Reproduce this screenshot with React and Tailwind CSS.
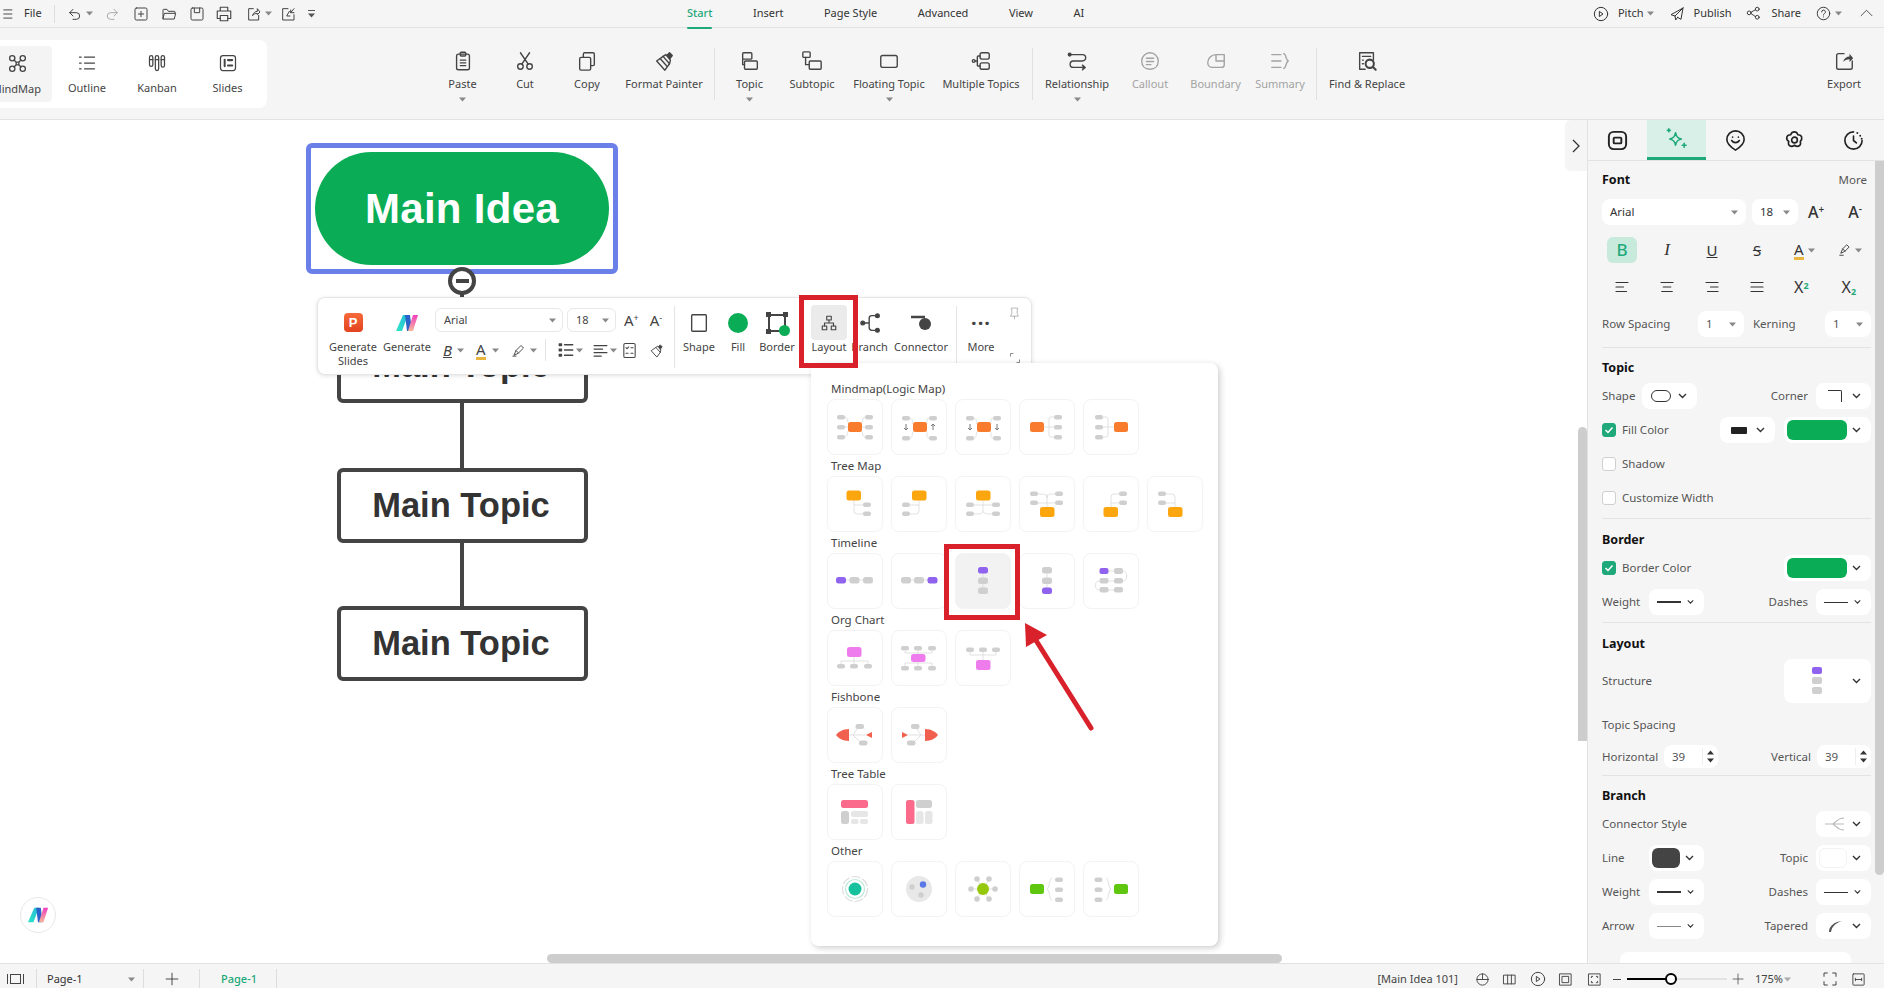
import { Fragment } from "react";

const G = "#cfcfcf";
const OR = "#f97b2d";
const AM = "#fba60f";
const PU = "#8f63ee";
const PK = "#ef7cec";
const GR = "#5fc70f";
const LINE = "#d9d9d9";

function Ico({ size = 20, className = "", sw = 1.5, children }) {
  return (
    <svg
      width={size}
      height={size}
      viewBox="0 0 24 24"
      fill="none"
      stroke="currentColor"
      strokeWidth={sw}
      strokeLinecap="round"
      strokeLinejoin="round"
      className={className}
    >
      {children}
    </svg>
  );
}

function Caret({ className = "text-[#888]" }) {
  return (
    <svg width="7" height="5" viewBox="0 0 7 5" className={className}>
      <path d="M0 0.5h7L3.5 4.5z" fill="currentColor" />
    </svg>
  );
}

function Chevron() {
  return (
    <svg width="9" height="6" viewBox="0 0 9 6" className="text-[#333]">
      <path d="M1 1l3.5 3.5L8 1" fill="none" stroke="currentColor" strokeWidth="1.4" />
    </svg>
  );
}

function Logo({ size = 24 }) {
  return (
    <svg width={size} height={size} viewBox="0 0 24 24">
      <defs>
        <linearGradient id="logoA" x1="0" y1="1" x2="1" y2="0">
          <stop offset="0" stopColor="#2ee6c4" />
          <stop offset="1" stopColor="#25b9dc" />
        </linearGradient>
        <linearGradient id="logoB" x1="0" y1="0" x2="0" y2="1">
          <stop offset="0" stopColor="#f03fc0" />
          <stop offset="1" stopColor="#f7b79a" />
        </linearGradient>
      </defs>
      <path d="M8 4h5L7 20H1z" fill="url(#logoA)" />
      <path d="M10 4h5l2 16h-5z" fill="#2b62c9" />
      <path d="M18 4h5l-5 16h-5z" fill="url(#logoB)" />
    </svg>
  );
}

// ribbon icons
const ribbonIcons = {
  paste: (
    <>
      <rect x="5" y="4.5" width="14" height="17" rx="2" />
      <rect x="9" y="2.5" width="6" height="4" rx="1" />
      <path d="M9 11h6M9 14h6M9 17h6" />
    </>
  ),
  cut: (
    <>
      <circle cx="7" cy="18" r="3" />
      <circle cx="17" cy="18" r="3" />
      <path d="M8.5 15.5L17 3M15.5 15.5L7 3" />
    </>
  ),
  copy: (
    <>
      <rect x="4" y="8" width="12" height="14" rx="1.5" />
      <path d="M8 8V4.5A1.5 1.5 0 0 1 9.5 3h9A1.5 1.5 0 0 1 20 4.5v11a1.5 1.5 0 0 1-1.5 1.5H16" />
    </>
  ),
  painter: (
    <>
      <path d="M4 12l7-5 7 8-5 7z" />
      <path d="M11 7l3-2 5 6-1 4M8 9.5l7 8" />
      <path d="M15 6l3-3 3 3-3 4" fill="currentColor" />
    </>
  ),
  topic: (
    <>
      <rect x="4" y="3" width="10" height="7" rx="1" />
      <rect x="6" y="12" width="14" height="9" rx="1" />
      <path d="M4 10v6h2" />
    </>
  ),
  subtopic: (
    <>
      <rect x="2" y="2" width="8" height="6" rx="1" />
      <rect x="9" y="12" width="13" height="9" rx="1" />
      <path d="M5 8v8h4" />
    </>
  ),
  floating: <rect x="3" y="6" width="18" height="13" rx="2" />,
  multiple: (
    <>
      <rect x="11" y="3" width="10" height="7" rx="2" />
      <rect x="11" y="14" width="10" height="7" rx="2" />
      <circle cx="4" cy="12" r="1.5" />
      <path d="M5.5 12H8M11 6.5H9a1 1 0 0 0-1 1v9a1 1 0 0 0 1 1h2" />
    </>
  ),
  relationship: (
    <>
      <circle cx="4" cy="5" r="1.5" fill="currentColor" />
      <path d="M5 5h13a2 2 0 0 1 0 7H8a3 3 0 0 0 0 7h12" />
      <path d="M18 16.5l3 2.5-3 2.5" fill="currentColor" />
    </>
  ),
  callout: (
    <>
      <path d="M12 3a9 9 0 0 1 9 9c0 5-3 9-9 9-6 0-9-4-9-9a9 9 0 0 1 9-9z" />
      <path d="M8 9h8M8 12.5h8M8 16h5" />
    </>
  ),
  boundary: <path d="M3 14a9 9 0 0 1 9-9h9v11a3 3 0 0 1-3 3H8a5 5 0 0 1-5-5zM12 5v7h9" />,
  summary: <path d="M3 5h10M3 12h10M3 19h10M16 4c3 0 2 7 5 8-3 1-2 8-5 8" />,
  find: (
    <>
      <path d="M10 21H4V3h15v8" />
      <path d="M7 7h9M7 11h1M7 15h1" />
      <circle cx="15" cy="15" r="4.5" strokeWidth="2.2" />
      <path d="M18.5 18.5L21.5 21.5" strokeWidth="2.2" />
    </>
  ),
  export: (
    <>
      <path d="M12 4H6a2 2 0 0 0-2 2v13a2 2 0 0 0 2 2h13a2 2 0 0 0 2-2v-7" />
      <path d="M11 13c1-4 4-6 7-6V4l4 5-4 4v-3c-3 0-5 1-7 3z" fill="currentColor" stroke="none" />
    </>
  ),
};

const ribbonGroups = [
  [
    { key: "paste", label: "Paste", w: "w-[63px]", caret: true },
    { key: "cut", label: "Cut", w: "w-[62px]" },
    { key: "copy", label: "Copy", w: "w-[62px]" },
    { key: "painter", label: "Format Painter", w: "w-[92px]" },
  ],
  [
    { key: "topic", label: "Topic", w: "w-[61px]", caret: true },
    { key: "subtopic", label: "Subtopic", w: "w-[64px]" },
    { key: "floating", label: "Floating Topic", w: "w-[90px]", caret: true },
    { key: "multiple", label: "Multiple Topics", w: "w-[94px]" },
  ],
  [
    { key: "relationship", label: "Relationship", w: "w-[80px]", caret: true },
    { key: "callout", label: "Callout", w: "w-[66px]", off: true },
    { key: "boundary", label: "Boundary", w: "w-[65px]", off: true },
    { key: "summary", label: "Summary", w: "w-[64px]", off: true },
  ],
  [{ key: "find", label: "Find & Replace", w: "w-[92px]" }],
];

function RibbonBtn({ item }) {
  return (
    <div
      className={`${item.w} flex flex-col items-center pt-[22px] ${
        item.off ? "text-[#a3a3a3]" : "text-[#444]"
      }`}
    >
      <Ico size={22}>{ribbonIcons[item.key]}</Ico>
      <span className="mt-[3px] text-[11px] leading-[18px] whitespace-nowrap">{item.label}</span>
      {item.caret && (
        <span className="mt-[4px]">
          <Caret />
        </span>
      )}
    </div>
  );
}

function TopBar() {
  const quick = [
    [<path d="M9 5L4 10l5 5M4 10h10a5 5 0 0 1 0 10H9" />, "text-[#444]", 16, "ml-[12px]", true],
    [<path d="M15 5l5 5-5 5M20 10H10a5 5 0 0 0 0 10h5" />, "text-[#aaa]", 16, "ml-[11px]"],
    [
      <>
        <rect x="3" y="3" width="18" height="18" rx="2" />
        <path d="M12 8v8M8 12h8" />
      </>,
      "text-[#444]",
      16,
      "ml-[13px]",
    ],
    [<path d="M3 19V6a1 1 0 0 1 1-1h5l2 3h9a1 1 0 0 1 1 1v2M3 19l2-8h17l-2 8z" />, "text-[#444]", 16, "ml-[12px]"],
    [
      <>
        <rect x="3" y="3" width="18" height="18" rx="2" />
        <path d="M8 3v7h8V3" />
      </>,
      "text-[#444]",
      16,
      "ml-[12px]",
    ],
    [
      <>
        <path d="M7 8V3h10v5M7 18H3V8h18v10h-4" />
        <rect x="7" y="14" width="10" height="7" />
      </>,
      "text-[#444]",
      18,
      "ml-[10px]",
    ],
    [
      <>
        <path d="M11 4H4v17h15v-7" />
        <path d="M10 14c1-4 4-6 7-6V4l4 5-4 4v-2c-3 0-5 1-7 3z" />
      </>,
      "text-[#444]",
      16,
      "ml-[13px]",
      true,
    ],
    [
      <>
        <path d="M12 4H4v17h17v-8" />
        <path d="M21 4l-5 6v-4M16 10h5" />
        <path d="M14 8l-4 7h5" />
      </>,
      "text-[#444]",
      16,
      "ml-[8px]",
    ],
  ];

  return (
    <div className="flex h-[28px] shrink-0 items-center border-b border-[#e2e2e2] bg-[#f5f5f5] text-[11px] text-[#333]">
      <div className="flex w-[687px] items-center pl-[2px]">
        <Ico size={14}>
          <path d="M3 5h14M3 12h14M3 19h14" />
        </Ico>
        <span className="ml-[8px]">File</span>
        <span className="ml-[12px] h-[18px] w-px bg-[#ddd]" />
        {quick.map(([paths, color, size, ml, caret], i) => (
          <Fragment key={i}>
            <span className={`${ml} ${color}`}>
              <Ico size={size}>{paths}</Ico>
            </span>
            {caret && (
              <span className="ml-[3px]">
                <Caret />
              </span>
            )}
          </Fragment>
        ))}
        <span className="ml-[12px] flex flex-col items-center gap-[2px]">
          <span className="h-px w-[7px] bg-[#555]" />
          <Caret className="text-[#555]" />
        </span>
      </div>

      <div className="flex items-center gap-[40.5px]">
        <span className="relative font-medium text-[#1fa97a]">
          Start
          <span className="absolute -bottom-[7px] left-0 h-[2px] w-full rounded bg-[#1fa97a]" />
        </span>
        <span>Insert</span>
        <span>Page Style</span>
        <span>Advanced</span>
        <span>View</span>
        <span>AI</span>
      </div>

      <div className="ml-auto flex items-center pr-[11px]">
        <Ico size={16}>
          <circle cx="12" cy="12" r="10" />
          <path d="M10 8.5l5 3.5-5 3.5z" />
        </Ico>
        <span className="ml-[9px]">Pitch</span>
        <span className="ml-[4px]">
          <Caret />
        </span>
        <span className="ml-[15px]">
          <Ico size={16}>
            <path d="M21 3L3 13l6 2 1 6 3-4M21 3L9 15M21 3l-3 17-5-3" />
          </Ico>
        </span>
        <span className="ml-[8px]">Publish</span>
        <span className="ml-[15px]">
          <Ico size={15}>
            <circle cx="5" cy="11" r="3" />
            <circle cx="18" cy="5" r="3" />
            <circle cx="18" cy="18" r="3" />
            <path d="M8 10l7-4M8 12l7 5" />
          </Ico>
        </span>
        <span className="ml-[10px]">Share</span>
        <span className="ml-[15px]">
          <Ico size={15}>
            <circle cx="12" cy="12" r="10" />
            <path d="M9 9.5a3 3 0 1 1 4.5 2.5c-1 .6-1.5 1.2-1.5 2.5M12 17.5v.1" />
          </Ico>
        </span>
        <span className="ml-[4px]">
          <Caret />
        </span>
        <span className="ml-[18px]">
          <Ico size={13}>
            <path d="M2 16l10-10 10 10" />
          </Ico>
        </span>
      </div>
    </div>
  );
}

function Ribbon() {
  const views = [
    {
      label: "Outline",
      w: "w-[70px]",
      icon: <path d="M3 5h2M9 5h12M3 12h2M9 12h12M3 19h2M9 19h12" />,
    },
    {
      label: "Kanban",
      w: "w-[70px]",
      icon: (
        <>
          <rect x="3" y="3" width="4" height="13" rx="2" />
          <rect x="10" y="3" width="4" height="18" rx="2" />
          <rect x="17" y="3" width="4" height="14" rx="2" />
          <path d="M3 8h4M10 8h4M17 8h4" />
        </>
      ),
    },
    {
      label: "Slides",
      w: "w-[71px]",
      icon: (
        <>
          <rect x="3" y="3" width="18" height="18" rx="3" />
          <path d="M8 8v8" strokeWidth="2.4" />
          <path d="M12 8.5h5M12 15h5" strokeWidth="2.6" />
        </>
      ),
    },
  ];

  return (
    <div className="flex h-[92px] shrink-0 border-b border-[#e2e2e2] bg-[#f5f5f5]">
      <div className="mt-[12px] flex h-[68px] w-[267px] shrink-0 items-center rounded-r-lg bg-white text-[11px] text-[#444]">
        <div className="relative flex h-[56px] w-[52px] flex-col items-center overflow-hidden rounded-r bg-[#f4f4f4] pt-[7px]">
          <span className="-ml-[18px]">
            <Ico size={21}>
              <circle cx="6" cy="6" r="3" />
              <circle cx="18" cy="6" r="3" />
              <circle cx="6" cy="18" r="3" />
              <circle cx="18" cy="18" r="3" />
              <path d="M8 8l2.5 2.5h3L16 8M8 16l2.5-2.5h3L16 16M10.5 10.5v3M13.5 10.5v3" />
            </Ico>
          </span>
          <span className="absolute right-[11px] bottom-[4px] whitespace-nowrap leading-[18px]">MindMap</span>
        </div>
        <div className="flex pt-[2px]">
          {views.map((v) => (
            <div key={v.label} className={`${v.w} flex flex-col items-center`}>
              <Ico size={20}>{v.icon}</Ico>
              <span className="mt-[6px] leading-[18px]">{v.label}</span>
            </div>
          ))}
        </div>
      </div>

      <div className="ml-[164px] flex">
        {ribbonGroups.map((group, i) => (
          <Fragment key={i}>
            {i > 0 && <span className="mx-[4px] mt-[20px] h-[52px] w-px bg-[#e0e0e0]" />}
            {group.map((item) => (
              <RibbonBtn key={item.key} item={item} />
            ))}
          </Fragment>
        ))}
      </div>

      <div className="ml-auto mr-[12px] flex w-[56px] flex-col items-center pt-[22px] text-[#444]">
        <Ico size={22}>{ribbonIcons.export}</Ico>
        <span className="mt-[3px] text-[11px] leading-[18px]">Export</span>
      </div>
    </div>
  );
}

function Thumb({ rects = [], path, extra, active }) {
  return (
    <div
      className={`h-[56px] w-[56px] rounded-lg border border-[#f3f3f3] ${
        active ? "bg-[#f2f2f2]" : "bg-white"
      }`}
    >
      <svg width="54" height="54" viewBox="1 1 54 54">
        {path && <path d={path} fill="none" stroke={LINE} strokeWidth="0.8" />}
        {rects.map(([x, y, w, h, c = G], i) => (
          <rect key={i} x={x} y={y} width={w} height={h} rx={h > 6 ? 2.5 : 2} fill={c} />
        ))}
        {extra}
      </svg>
    </div>
  );
}

const chip = (x, y) => [x, y, 8, 4.5];
const col = (x, ...ys) => ys.map((y) => chip(x, y));
const flow = (x, y, c) => [x, y, 10, 6.5, c];

const layoutSections = [
  {
    title: "Mindmap(Logic Map)",
    items: [
      {
        rects: [[21, 23, 14, 10, OR], ...col(10, 16, 26, 36), ...col(38, 16, 26, 36)],
        path: "M18 18c3 0 2 6 4 7M18 28h3M18 38c3 0 2-6 4-7M38 18c-3 0-2 6-4 7M38 28h-3M38 38c-3 0-2-6-4-7",
      },
      {
        rects: [[22, 23, 14, 10, OR], ...col(11, 17, 37), ...col(38, 17, 37)],
        path: "M19 19c3 0 2 5 3 6M19 39c3 0 2-5 3-6M38 19c-3 0-2 5-2 6M38 39c-3 0-2-5-2-6",
        extra: <path d="M15 25v6m-2-2l2 2 2-2M42 31v-6m-2 2l2-2 2 2" fill="none" stroke="#777" strokeWidth="1" />,
      },
      {
        rects: [[22, 23, 14, 10, OR], ...col(11, 17, 37), ...col(38, 17, 37)],
        path: "M19 19c3 0 2 5 3 6M19 39c3 0 2-5 3-6M38 19c-3 0-2 5-2 6M38 39c-3 0-2-5-2-6",
        extra: <path d="M15 25v6m-2-2l2 2 2-2M42 25v6m-2-2l2 2 2-2" fill="none" stroke="#777" strokeWidth="1" />,
      },
      {
        rects: [[11, 23, 14, 10, OR], ...col(35, 16, 26, 36)],
        path: "M25 28h10M35 18h-3a2 2 0 0 0-2 2v16a2 2 0 0 0 2 2h3",
      },
      {
        rects: [[31, 23, 14, 10, OR], ...col(12, 16, 26, 36)],
        path: "M31 28H20M20 18h3a2 2 0 0 1 2 2v16a2 2 0 0 1-2 2h-3",
      },
    ],
  },
  {
    title: "Tree Map",
    items: [
      {
        rects: [[19.5, 14.5, 14.5, 10, AM], ...col(36, 26.5, 35.5)],
        path: "M27 24v11a3 3 0 0 0 3 3h6M27 29h9",
      },
      {
        rects: [[21, 14.5, 14.5, 10, AM], ...col(11, 26.5, 35.5)],
        path: "M28 24v11a3 3 0 0 1-3 3h-6M28 29h-9",
      },
      {
        rects: [[21, 14.5, 14.5, 10, AM], ...col(11, 26.5, 35.5), ...col(37, 26.5, 35.5)],
        path: "M28 24v11M28 29H19M28 29h9M28 35c0 3-5 3-9 3M28 35c0 3 5 3 9 3",
      },
      {
        rects: [[21, 31, 14.5, 10, AM], ...col(11, 15.5, 24.5), ...col(36, 15.5, 24.5)],
        path: "M28 31V18M19 27h17M19 18c5 0 9 0 9 4M36 18c-5 0-8 0-8 4",
      },
      {
        rects: [[20.5, 31, 14.5, 10, AM], ...col(36, 15.5, 24.5)],
        path: "M28 31V21a3 3 0 0 1 3-3h5M28 27h8",
      },
      {
        rects: [[21, 31, 14.5, 10, AM], ...col(11, 15.5, 24.5)],
        path: "M28 31V21a3 3 0 0 0-3-3h-6M28 27h-9",
      },
    ],
  },
  {
    title: "Timeline",
    items: [
      { rects: [flow(9, 24, PU), flow(22.5, 24, G), flow(36, 24, G)], path: "M19 27h18" },
      { rects: [flow(10, 24, G), flow(23, 24, G), flow(36.5, 24, PU)], path: "M19 27h18" },
      { rects: [flow(23, 14, PU), flow(23, 24.5, G), flow(23, 34.5, G)], path: "M28 20v15" },
      { rects: [flow(23, 14, G), flow(23, 24.5, G), flow(23, 34.5, PU)], path: "M28 20v15" },
      {
        rects: [
          [16.5, 15, 9, 6, PU],
          [31, 15, 9, 6],
          [16.5, 25, 9, 5.5],
          [31, 25, 9, 5.5],
          [16.5, 34, 9, 5.5],
          [31, 34, 9, 5.5],
        ],
        path: "M25 18h6M25 28h6M25 37h6M40 18c5 0 5 10 0 10M16 28c-5 0-5 9 0 9",
      },
    ],
  },
  {
    title: "Org Chart",
    items: [
      {
        rects: [[20, 17, 14.5, 10, PK], ...[10, 23, 37].map((x) => chip(x, 34))],
        path: "M27 27v7M14 34v-3h27v3",
      },
      {
        rects: [[20, 24, 14.5, 8, PK], ...[10, 23, 37].map((x) => chip(x, 16)), ...[10, 23, 37].map((x) => chip(x, 36))],
        path: "M27 20v16M14 21v2h27v-2M14 36v-3h27v3",
      },
      {
        rects: [[21, 30, 14.5, 10, PK], ...[11, 24, 37].map((x) => chip(x, 17.5))],
        path: "M28 22v8M15 22v3h26v-3",
      },
    ],
  },
  {
    title: "Fishbone",
    items: [
      {
        rects: [
          [28.5, 17, 8.5, 5],
          [32, 33.5, 8.5, 5],
        ],
        path: "M22 28h17M26 28l4-6M26 28l6 6",
        extra: (
          <>
            <path d="M22 22v12c-6 0-11-3-13-6 2-3 7-6 13-6z" fill="#f1604f" />
            <path d="M39 28l6-3v6z" fill="#f1604f" />
          </>
        ),
      },
      {
        rects: [
          [20, 17, 8.5, 5],
          [16, 33.5, 8.5, 5],
        ],
        path: "M17 28h17M30 28l-4-6M30 28l-6 6",
        extra: (
          <>
            <path d="M34 22v12c6 0 11-3 13-6-2-3-7-6-13-6z" fill="#f1604f" />
            <path d="M17 28l-6-3v6z" fill="#f1604f" />
          </>
        ),
      },
    ],
  },
  {
    title: "Tree Table",
    items: [
      {
        rects: [
          [14, 16, 27, 8, "#fb6a8a"],
          [14, 27, 8, 13],
          [24, 27, 17, 6, "#e6e6e6"],
          [24, 35, 7.5, 5, "#e6e6e6"],
          [33, 35, 8, 5, "#e6e6e6"],
        ],
      },
      {
        rects: [
          [15, 16, 8.5, 24, "#fb6a8a"],
          [25, 16, 16, 8],
          [25, 27, 7.5, 13, "#e6e6e6"],
          [34, 27, 7.5, 13, "#e6e6e6"],
        ],
      },
    ],
  },
  {
    title: "Other",
    items: [
      {
        extra: (
          <>
            <circle cx="28" cy="28" r="12.5" fill="none" stroke="#dedede" strokeWidth="1.2" strokeDasharray="9 2" />
            <circle cx="28" cy="28" r="9.5" fill="none" stroke="#bfe8dc" strokeWidth="1.2" />
            <circle cx="28" cy="28" r="6.5" fill="#16c29d" />
          </>
        ),
      },
      {
        extra: (
          <>
            <circle cx="28" cy="28" r="13" fill="#e8e8e8" />
            <circle cx="32" cy="23.5" r="3.2" fill="#5a78e6" />
            <circle cx="21" cy="26" r="2.7" fill="#cfcfcf" />
            <circle cx="30" cy="34" r="2.7" fill="#cfcfcf" />
          </>
        ),
      },
      {
        path: "M16 28h24M22 18l12 20M34 18L22 38",
        extra: (
          <>
            {[
              [16, 28],
              [40, 28],
              [22, 18],
              [34, 18],
              [22, 38],
              [34, 38],
            ].map(([cx, cy], i) => (
              <circle key={i} cx={cx} cy={cy} r="2.8" fill="#cfcfcf" />
            ))}
            <circle cx="28" cy="28" r="6" fill="#95c80a" />
          </>
        ),
      },
      {
        rects: [[11, 23, 14, 10, GR], ...col(36, 16.5, 26.5, 36.5)],
        path: "M33 17c-3 0-2 10-5 11 3 1 2 11 5 11",
      },
      {
        rects: [[31, 23, 14, 10, GR], ...col(11.5, 16.5, 26.5, 36.5)],
        path: "M23 17c3 0 2 10 5 11-3 1-2 11-5 11",
      },
    ],
  },
];

function LayoutPopup() {
  return (
    <div className="absolute top-[243px] left-[811px] h-[583px] w-[407px] rounded-lg bg-white pt-[15px] pl-[16px] shadow-[2px_2px_6px_rgba(0,0,0,0.2)]">
      {layoutSections.map((s, si) => (
        <div key={s.title} className="h-[77px]">
          <div className="h-[21px] pl-[4px] text-[11.5px] leading-[21px] text-[#444]">{s.title}</div>
          <div className="flex gap-[8px]">
            {s.items.map((it, i) => (
              <Thumb key={i} {...it} active={si === 2 && i === 2} />
            ))}
          </div>
        </div>
      ))}
    </div>
  );
}

function ToolBtn({ w, label, children, labelClass = "" }) {
  return (
    <div className={`${w} flex shrink-0 flex-col items-center`}>
      <div className="flex h-[33px] w-full items-center justify-center">{children}</div>
      <span className={`whitespace-nowrap text-[11px] leading-[16px] text-[#444] ${labelClass}`}>{label}</span>
    </div>
  );
}

function FloatingBar() {
  return (
    <div className="absolute top-[177px] left-[317px] flex h-[78px] w-[715px] rounded-lg border border-[#e6e6e6] bg-white pt-[8px] pl-[7px] text-[#444] shadow-[0_1px_4px_rgba(0,0,0,0.12)]">
      <div className="flex w-[56px] shrink-0 flex-col items-center text-center">
        <div className="flex h-[33px] items-center">
          <span className="flex h-[19px] w-[19px] items-center justify-center rounded-[4px] bg-linear-to-b from-[#f7693a] to-[#e2421f] font-['Liberation_Sans',sans-serif] text-[13px] font-bold text-white">
            P
          </span>
        </div>
        <span className="mt-[1px] text-[11px] leading-[14px]">
          Generate
          <br />
          Slides
        </span>
      </div>
      <ToolBtn w="w-[52px]" label="Generate">
        <Logo size={24} />
      </ToolBtn>

      <div className="ml-[2px] flex w-[237px] shrink-0 flex-col pt-[2px]">
        <div className="flex h-[24px] items-center text-[11px]">
          <div className="flex h-[24px] w-[128px] items-center justify-between rounded-md border border-[#e8e8e8] pr-[6px] pl-[8px]">
            Arial
            <Caret />
          </div>
          <div className="ml-[4px] flex h-[24px] w-[49px] items-center justify-between rounded-md border border-[#e8e8e8] pr-[6px] pl-[8px]">
            18
            <Caret />
          </div>
          <span className="ml-[8px] text-[15px] leading-none">
            A<sup className="text-[9px]">+</sup>
          </span>
          <span className="ml-[11px] text-[15px] leading-none">
            A<sup className="text-[9px]">-</sup>
          </span>
        </div>
        <div className="mt-[7px] flex h-[22px] items-center">
          <span className="ml-[8px] text-[15px] leading-none italic underline">B</span>
          <span className="ml-[5px]">
            <Caret />
          </span>
          <span className="ml-[12px] border-b-[3px] border-[#e8b63c] text-[15px] leading-[16px]">A</span>
          <span className="ml-[6px]">
            <Caret />
          </span>
          <span className="ml-[12px]">
            <Ico size={15}>
              <path d="M5 19l3-7 8-8 4 4-8 8z M8 12l4 4M3 21h5" />
            </Ico>
          </span>
          <span className="ml-[4px]">
            <Caret />
          </span>
          <span className="ml-[8px] h-[22px] w-px bg-[#e5e5e5]" />
          <span className="ml-[11px]">
            <Ico size={18} sw={1.8}>
              <path d="M10 5h11M10 12h11M10 19h11M3 4h3v2H3zM3 11h3v2H3zM3 18h3v2H3z" />
            </Ico>
          </span>
          <span className="ml-[1px]">
            <Caret />
          </span>
          <span className="ml-[9px]">
            <Ico size={17} sw={1.8}>
              <path d="M3 5h18M3 10h12M3 15h18M3 20h10" />
            </Ico>
          </span>
          <span className="ml-[1px]">
            <Caret />
          </span>
          <span className="ml-[4px]">
            <Ico size={17}>
              <rect x="4" y="2" width="16" height="20" rx="2" />
              <path d="M7 8l1.5 1.5L11 7M7 16h3M14 8h3M14 16h3" />
            </Ico>
          </span>
          <span className="ml-[11px]">
            <Ico size={15}>
              <path d="M4 12l7-5 7 8-5 7z" />
              <path d="M15 6l3-3 3 3-3 4" fill="currentColor" />
              <path d="M11 7l3-2 5 6-1 4" />
            </Ico>
          </span>
        </div>
      </div>

      <span className="mx-[2px] h-[62px] w-px shrink-0 bg-[#e5e5e5]" />
      <ToolBtn w="w-[44px]" label="Shape">
        <Ico size={22}>
          <rect x="4" y="3" width="16" height="18" rx="1" />
        </Ico>
      </ToolBtn>
      <ToolBtn w="w-[34px]" label="Fill">
        <span className="h-[20px] w-[20px] rounded-full bg-[#0aad56]" />
      </ToolBtn>
      <ToolBtn w="w-[44px]" label="Border">
        <div className="relative h-[22px] w-[22px]">
          <span className="absolute inset-[2px] border-2 border-[#444]" />
          <span className="absolute top-0 left-0 h-[5px] w-[5px] bg-[#444]" />
          <span className="absolute top-0 right-0 h-[5px] w-[5px] bg-[#444]" />
          <span className="absolute bottom-0 left-0 h-[5px] w-[5px] bg-[#444]" />
          <span className="absolute -right-[2px] -bottom-[2px] h-[11px] w-[11px] rounded-full bg-[#0aad56]" />
        </div>
      </ToolBtn>
      <div className="ml-[12px] flex w-[36px] shrink-0 flex-col items-center">
        <div className="-mt-[1px] mb-[-1px] flex h-[35px] w-full shrink-0 items-center justify-center rounded bg-[#ebebeb]">
          <Ico size={18}>
            <rect x="9" y="3" width="6" height="5" />
            <rect x="3" y="16" width="6" height="5" />
            <rect x="15" y="16" width="6" height="5" />
            <path d="M12 8v4M6 16v-4h12v4" />
          </Ico>
        </div>
        <span className="text-[11px] leading-[16px]">Layout</span>
      </div>
      <ToolBtn w="w-[47px]" label="Branch" labelClass="-ml-[2px]">
        <Ico size={22}>
          <circle cx="3" cy="12" r="2" fill="currentColor" />
          <circle cx="19" cy="4" r="2" fill="currentColor" />
          <circle cx="19" cy="20" r="2" fill="currentColor" />
          <path d="M5 12h4M17 4h-4a3 3 0 0 0-3 3v10a3 3 0 0 0 3 3h4" />
        </Ico>
      </ToolBtn>
      <ToolBtn w="w-[54px]" label="Connector">
        <svg width="22" height="16" viewBox="0 0 22 16">
          <path d="M1 2h14" stroke="#444" strokeWidth="2.5" />
          <circle cx="15" cy="9" r="6" fill="#444" />
        </svg>
      </ToolBtn>
      <span className="ml-[8px] h-[62px] w-px shrink-0 bg-[#e5e5e5]" />
      <ToolBtn w="w-[48px]" label="More">
        <span className="text-[20px] leading-none font-bold tracking-[1px]">···</span>
      </ToolBtn>
      <div className="flex flex-col items-center justify-between pt-[1px] pb-[3px] pl-[3px] text-[#aaa]">
        <Ico size={13}>
          <path d="M12 17v5M5 17h14l-2-5V4h1V2H6v2h1v8z" />
        </Ico>
        <svg width="10" height="10" viewBox="0 0 10 10" className="mb-[8px] text-[#888]">
          <path d="M0.5 3.5V0.5h3M9.5 6.5v3h-3" fill="none" stroke="currentColor" />
        </svg>
      </div>
    </div>
  );
}

function TopicNode({ top }) {
  return (
    <div
      className="absolute left-[337px] flex h-[75px] w-[251px] items-center justify-center rounded-md border-4 border-[#444] bg-white pr-[3px] font-['Liberation_Sans',sans-serif] text-[34.5px] font-bold text-[#333]"
      style={{ top }}
    >
      Main Topic
    </div>
  );
}

function Canvas() {
  return (
    <div className="relative min-w-0 flex-1 overflow-hidden bg-white">
      <div className="absolute top-[150px] left-[460px] h-[340px] w-[4px] bg-[#444]" />

      <div className="absolute top-[23px] left-[306px] flex h-[131px] w-[312px] items-center justify-center rounded-md border-[5px] border-[#6b7fe8]">
        <div className="flex h-[113px] w-[294px] items-center justify-center rounded-full bg-[#0aad56] font-['Liberation_Sans',sans-serif] text-[42px] font-bold tracking-[0.3px] text-white">
          Main Idea
        </div>
      </div>
      <div className="absolute top-[147px] left-[448px] flex h-[28px] w-[28px] items-center justify-center rounded-full border-4 border-[#444] bg-white">
        <span className="h-[4px] w-[13px] bg-[#444]" />
      </div>

      <TopicNode top={208} />
      <TopicNode top={348} />
      <TopicNode top={486} />

      <FloatingBar />
      <LayoutPopup />

      <div className="absolute top-[175px] left-[799px] h-[73px] w-[59px] border-[5px] border-[#d9212b]" />
      <div className="absolute top-[424px] left-[944px] h-[76px] w-[76px] border-[5px] border-[#d9212b]" />
      <svg className="absolute top-[500px] left-[1020px]" width="76" height="112" viewBox="0 0 76 112">
        <path d="M12 14L71 108" stroke="#d9212b" strokeWidth="5" strokeLinecap="round" />
        <path d="M5 3L27 15L6 27z" fill="#d9212b" />
      </svg>

      <div className="absolute bottom-[30px] left-[20px] flex h-[36px] w-[36px] items-center justify-center rounded-full border border-[#e8e8e8] bg-white">
        <Logo size={22} />
      </div>

      <div className="absolute bottom-0 left-[547px] h-[9px] w-[735px] rounded-full bg-[#cdcdcd]" />
      <div className="absolute top-[307px] right-0 h-[314px] w-[9px] rounded-t-full bg-[#cdcdcd]" />
      <div className="absolute top-0 right-0 flex h-[51px] w-[22px] items-center justify-center rounded-l-md bg-[#f5f5f5]">
        <svg width="8" height="14" viewBox="0 0 8 14">
          <path d="M1 1l6 6-6 6" fill="none" stroke="#333" strokeWidth="1.3" />
        </svg>
      </div>
    </div>
  );
}

function Box({ w, h = "h-[26px]", children, className = "" }) {
  return (
    <div className={`${w} ${h} flex shrink-0 items-center rounded-lg bg-white ${className}`}>{children}</div>
  );
}

function Select({ w = "w-[46px]", value }) {
  return (
    <Box w={w} className="justify-between pr-[8px] pl-[8px]">
      {value}
      <Caret />
    </Box>
  );
}

function PickBox({ w = "w-[55px]", children, h }) {
  return (
    <Box w={w} h={h} className="justify-between pr-[10px] pl-[8px]">
      <span className="flex flex-1 items-center justify-center pr-[6px]">{children}</span>
      <Chevron />
    </Box>
  );
}

const LineSample = ({ w = 24, h = 2, c = "bg-[#333]" }) => (
  <span className={`block ${c}`} style={{ width: w, height: h }} />
);

function Swatch({ c = "bg-[#0aad56]" }) {
  return <span className={`block h-[20px] w-[60px] rounded-md ${c}`} />;
}

function ColorBox({ c }) {
  return (
    <Box w="w-[87px]" className="justify-between pr-[10px] pl-[3px]">
      <Swatch c={c} />
      <Chevron />
    </Box>
  );
}

function Check({ on }) {
  return (
    <span
      className={`flex h-[14px] w-[14px] shrink-0 items-center justify-center rounded-[3px] border ${
        on ? "border-[#1fa97a] bg-[#1fa97a]" : "border-[#cfcfcf] bg-white"
      }`}
    >
      {on && (
        <svg width="10" height="10" viewBox="0 0 10 10">
          <path d="M1.5 5l2.5 2.5 4.5-5" fill="none" stroke="white" strokeWidth="1.5" />
        </svg>
      )}
    </span>
  );
}

function Heading({ children, className = "" }) {
  return <div className={`h-[20px] text-[12.5px] leading-[20px] font-bold text-[#111] ${className}`}>{children}</div>;
}

function Divider({ className }) {
  return <div className={`h-px bg-[#e3e3e3] ${className}`} />;
}

function Row({ className = "mt-[8px]", children }) {
  return <div className={`flex h-[26px] items-center ${className}`}>{children}</div>;
}

function NumberInput({ value }) {
  return (
    <div className="flex h-[23px] w-[54px] shrink-0 items-center rounded-lg bg-white pl-[8px]">
      <span className="flex-1">{value}</span>
      <span className="flex h-[17px] w-[16px] flex-col items-center justify-between border-l border-[#eee] py-[2px]">
        <Caret className="rotate-180 text-[#333]" />
        <Caret className="text-[#333]" />
      </span>
    </div>
  );
}

function Panel() {
  const tabs = [
    <>
      <rect x="3" y="3" width="18" height="18" rx="5" />
      <rect x="8" y="9" width="8" height="6" rx="1" />
    </>,
    <>
      <path d="M11 6c.8 4 2 5.5 6 6.5-4 1-5.200 2.500-6 6.500-.8-4-2-5.500-6-6.500 4-1 5.200-2.500 6-6.500z" />
      <path d="M4 2v3M2.5 3.5h3M20 17v4M18 19h4" />
    </>,
    <>
      <path d="M12 22c-5-3-9-7-9-11a9 9 0 0 1 18 0c0 4-4 8-9 11z" />
      <path d="M8 12c2 3 6 3 8 0M9 8.5v.1M15 8.5v.1" />
    </>,
    <>
      <path d="M12 3c2 0 3 1.5 3.5 3 1.5 0 3.5.5 4 2.500.5 2-.5 3.500-1.500 4.500.5 1.500.5 3.500-1 4.500-1.500 1-3.500.5-5-.5-1.500 1-3.500 1.500-5 .5s-1.500-3-1-4.500C4.500 12 3.500 10.500 4 8.500 4.500 6.500 6.500 6 8 6c.5-1.500 2-3 4-3z" />
      <circle cx="12" cy="11.5" r="3" />
    </>,
    <>
      <path d="M12 3a9 9 0 1 0 9 9" />
      <path d="M12 7.5V12l3 2.5" />
      <path d="M16 4v.1M19 7v.1M20.5 10v.1" strokeWidth="2" />
    </>,
  ];

  return (
    <div className="relative flex w-[297px] shrink-0 flex-col overflow-hidden border-l border-[#e2e2e2] bg-[#f5f5f5] text-[11.5px] text-[#555]">
      <div className="flex h-[41px] shrink-0 border-b border-[#e2e2e2]">
        {tabs.map((t, i) => (
          <div
            key={i}
            className={`flex w-[59px] items-center justify-center ${
              i === 1 ? "border-b-[3px] border-[#1fa97a] bg-[#d8f0e7] text-[#1fa97a]" : "text-[#222]"
            }`}
          >
            <Ico size={23} sw={i === 0 ? 2 : 1.7}>
              {t}
            </Ico>
          </div>
        ))}
      </div>
      <div className="absolute top-[41px] right-0 h-[714px] w-[9px] rounded-b-full bg-[#cdcdcd]" />

      <div className="relative pr-[13px] pl-[14px]">
        <Heading className="mt-[9px] flex justify-between pr-[4px]">
          Font
          <span className="text-[11.5px] font-normal text-[#555]">More</span>
        </Heading>
        <Row className="mt-[9px] text-[#333]">
          <Select w="w-[144px]" value="Arial" />
          <span className="ml-[6px]">
            <Select value="18" />
          </span>
          <span className="ml-[10px] text-[16px] leading-none font-medium">
            A<sup className="text-[10px] text-[#333]">+</sup>
          </span>
          <span className="ml-[24px] text-[16px] leading-none font-medium">
            A<sup className="text-[10px]">-</sup>
          </span>
        </Row>
        <Row className="mt-[12px] text-[#333]">
          <span className="ml-[5px] flex h-[26px] w-[30px] items-center justify-center rounded-md bg-[#c8eadd] text-[17px] font-medium text-[#1fa97a]">
            B
          </span>
          <span className="ml-[19px] w-[22px] text-center font-['Liberation_Serif',serif] text-[17px] italic">I</span>
          <span className="ml-[23px] w-[22px] text-center text-[15px] leading-[15px] underline">U</span>
          <span className="ml-[23px] w-[22px] text-center text-[15px] line-through">S</span>
          <span className="ml-[26px] border-b-[3px] border-[#e8b63c] text-[15px] leading-[16px]">A</span>
          <span className="ml-[4px]">
            <Caret />
          </span>
          <span className="ml-[23px]">
            <Ico size={14}>
              <path d="M5 17l3-7 7-7 4 4-7 7zM8 10l4 4M3 21h6" />
            </Ico>
          </span>
          <span className="ml-[3px]">
            <Caret />
          </span>
        </Row>
        <Row className="mt-[11px] text-[#333]">
          {["M4 6h16M4 12h10M4 18h14", "M4 6h16M7 12h10M5 18h14", "M4 6h16M10 12h10M6 18h14", "M4 6h16M4 12h16M4 18h16"].map(
            (d, i) => (
              <span key={d} className={i ? "ml-[27px]" : "ml-[11px]"}>
                <Ico size={18} sw={1.6}>
                  <path d={d} />
                </Ico>
              </span>
            ),
          )}
          <span className="ml-[28px] text-[16px] leading-none">
            X<sup className="text-[9px] font-bold text-[#1fa97a]">2</sup>
          </span>
          <span className="ml-[33px] text-[16px] leading-none">
            X<sub className="text-[9px] font-bold text-[#1fa97a]">2</sub>
          </span>
        </Row>
        <Row className="mt-[11px] justify-between">
          <span className="w-[96px]">Row Spacing</span>
          <Select value="1" />
          <span className="ml-[9px] flex-1">Kerning</span>
          <Select value="1" />
        </Row>
        <Divider className="mt-[10px]" />

        <Heading className="mt-[10px]">Topic</Heading>
        <Row className="mt-[5px]">
          <span className="w-[40px]">Shape</span>
          <PickBox>
            <span className="h-[12px] w-[20px] rounded-full border border-[#333]" />
          </PickBox>
          <span className="flex-1 pr-[8px] text-right">Corner</span>
          <PickBox>
            <span className="h-[12px] w-[14px] rounded-tr-[2px] border-t border-r border-[#333]" />
          </PickBox>
        </Row>
        <Row>
          <Check on />
          <span className="ml-[6px] flex-1">Fill Color</span>
          <PickBox>
            <span className="h-[7px] w-[16px] rounded-[1px] bg-[#222]" />
          </PickBox>
          <span className="ml-[9px]">
            <ColorBox />
          </span>
        </Row>
        <Row>
          <Check />
          <span className="ml-[6px]">Shadow</span>
        </Row>
        <Row>
          <Check />
          <span className="ml-[6px]">Customize Width</span>
        </Row>
        <Divider className="mt-[7px]" />

        <Heading className="mt-[11px]">Border</Heading>
        <Row className="mt-[5px]">
          <Check on />
          <span className="ml-[6px] flex-1">Border Color</span>
          <ColorBox />
        </Row>
        <Row>
          <span className="w-[47px]">Weight</span>
          <PickBox>
            <LineSample />
          </PickBox>
          <span className="flex-1 pr-[8px] text-right">Dashes</span>
          <PickBox>
            <LineSample h={1} />
          </PickBox>
        </Row>
        <Divider className="mt-[7px]" />

        <Heading className="mt-[11px]">Layout</Heading>
        <div className="mt-[5px] flex h-[44px] items-center justify-between">
          Structure
          <Box w="w-[87px]" h="h-[44px]" className="justify-between pr-[10px] pl-[28px]">
            <svg width="10" height="28" viewBox="0 0 10 28">
              <rect y="0" width="10" height="7" rx="2" fill={PU} />
              <rect y="10" width="10" height="7" rx="2" fill={G} />
              <rect y="20" width="10" height="7" rx="2" fill={G} />
            </svg>
            <Chevron />
          </Box>
        </div>
        <div className="mt-[14px] h-[16px] leading-[16px]">Topic Spacing</div>
        <div className="mt-[12px] flex items-center justify-between">
          <span className="w-[62px]">Horizontal</span>
          <NumberInput value="39" />
          <span className="flex-1 pr-[6px] text-right">Vertical</span>
          <NumberInput value="39" />
        </div>
        <Divider className="mt-[7px]" />

        <Heading className="mt-[10px]">Branch</Heading>
        <Row className="mt-[5px] justify-between">
          Connector Style
          <PickBox>
            <svg width="20" height="14" viewBox="0 0 20 14">
              <path d="M0 7h8M19 1c-6 0-7 3-11 6 4 3 5 6 11 6M8 7h11" fill="none" stroke="#bbb" strokeWidth="1.2" />
            </svg>
          </PickBox>
        </Row>
        <Row>
          <span className="w-[47px]">Line</span>
          <Box w="w-[55px]" className="justify-between pr-[10px] pl-[3px]">
            <span className="h-[20px] w-[28px] rounded-md bg-[#444]" />
            <Chevron />
          </Box>
          <span className="flex-1 pr-[8px] text-right">Topic</span>
          <Box w="w-[55px]" className="justify-between pr-[10px] pl-[3px]">
            <span className="h-[20px] w-[28px] rounded-md border border-[#f3f3f3] bg-white" />
            <Chevron />
          </Box>
        </Row>
        <Row>
          <span className="w-[47px]">Weight</span>
          <PickBox>
            <LineSample />
          </PickBox>
          <span className="flex-1 pr-[8px] text-right">Dashes</span>
          <PickBox>
            <LineSample h={1} />
          </PickBox>
        </Row>
        <Row>
          <span className="w-[47px]">Arrow</span>
          <PickBox>
            <LineSample h={1} c="bg-[#888]" />
          </PickBox>
          <span className="flex-1 pr-[8px] text-right">Tapered</span>
          <PickBox>
            <svg width="14" height="12" viewBox="0 0 14 12">
              <path d="M1 12C1 6 6 2 14 1 8 3 4 6 3 12z" fill="#555" />
            </svg>
          </PickBox>
        </Row>
        <div className="mt-[13px] ml-[18px] h-[30px] w-[231px] rounded-t-lg bg-white" />
      </div>
    </div>
  );
}

function StatusBar() {
  return (
    <div className="flex h-[25px] shrink-0 items-center border-t border-[#e2e2e2] bg-[#f5f5f5] pt-[6px] text-[11px] text-[#333]">
      <span className="ml-[7px]">
        <svg width="17" height="12" viewBox="0 0 17 12" className="text-[#444]">
          <path d="M.5 1v10M16.5 1v10" stroke="currentColor" />
          <rect x="3.5" y="1.5" width="10" height="9" fill="none" stroke="currentColor" />
        </svg>
      </span>
      <span className="ml-[12px] h-[20px] w-px bg-[#ddd]" />
      <div className="ml-[3px] flex h-[24px] w-[100px] items-center justify-between pr-[5px] pl-[7px]">
        Page-1
        <Caret />
      </div>
      <span className="ml-[3px] h-[20px] w-px bg-[#ddd]" />
      <span className="ml-[21px]">
        <Ico size={14}>
          <path d="M12 2v20M2 12h20" />
        </Ico>
      </span>
      <span className="ml-[20px] h-[20px] w-px bg-[#ddd]" />
      <span className="ml-[21px] font-medium text-[#1fa97a]">Page-1</span>
      <span className="ml-[19px] h-[20px] w-px bg-[#ddd]" />

      <div className="ml-auto flex items-center pr-[18px] text-[#444]">
        <span>[Main Idea 101]</span>
        <span className="ml-[17px]">
          <Ico size={15}>
            <circle cx="12" cy="12" r="9" />
            <path d="M3 12h18M12 3v9" />
          </Ico>
        </span>
        <span className="ml-[12px]">
          <Ico size={15}>
            <path d="M3 5h18v14H3zM9 5v14M15 5v14" />
          </Ico>
        </span>
        <span className="ml-[13px]">
          <Ico size={16}>
            <circle cx="12" cy="12" r="10" />
            <path d="M10 8.5l5 3.5-5 3.5z" />
          </Ico>
        </span>
        <span className="ml-[12px]">
          <Ico size={15}>
            <rect x="3" y="3" width="18" height="18" />
            <rect x="7" y="7" width="10" height="10" />
          </Ico>
        </span>
        <span className="ml-[14px]">
          <Ico size={15}>
            <rect x="3" y="3" width="18" height="18" />
            <path d="M7 9V7h2M15 7h2v2M17 15v2h-2M9 17H7v-2" />
          </Ico>
        </span>
        <span className="ml-[11px] h-px w-[8px] bg-[#444]" />
        <div className="relative ml-[6px] flex h-[14px] w-[100px] items-center">
          <span className="h-[2px] w-full bg-[#e2e2e2]" />
          <span className="absolute left-0 h-[2px] w-[44px] bg-black" />
          <span className="absolute left-[38px] h-[12px] w-[12px] rounded-full border-[2.5px] border-black bg-white" />
        </div>
        <span className="ml-[5px]">
          <Ico size={12}>
            <path d="M12 2v20M2 12h20" />
          </Ico>
        </span>
        <span className="ml-[11px]">175%</span>
        <span className="ml-[1px]">
          <Caret className="text-[#aaa]" />
        </span>
        <span className="ml-[31px]">
          <Ico size={16}>
            <path d="M3 8V3h5M16 3h5v5M21 16v5h-5M8 21H3v-5" />
          </Ico>
        </span>
        <span className="ml-[13px]">
          <Ico size={15}>
            <rect x="3" y="3" width="18" height="18" rx="1" />
            <path d="M7 12h10M7 10v4M17 10v4" />
          </Ico>
        </span>
      </div>
    </div>
  );
}

export default function App() {
  return (
    <div className="flex h-screen w-screen flex-col overflow-hidden bg-white font-['Noto_Sans',sans-serif]">
      <TopBar />
      <Ribbon />
      <div className="flex min-h-0 flex-1">
        <Canvas />
        <Panel />
      </div>
      <StatusBar />
    </div>
  );
}
